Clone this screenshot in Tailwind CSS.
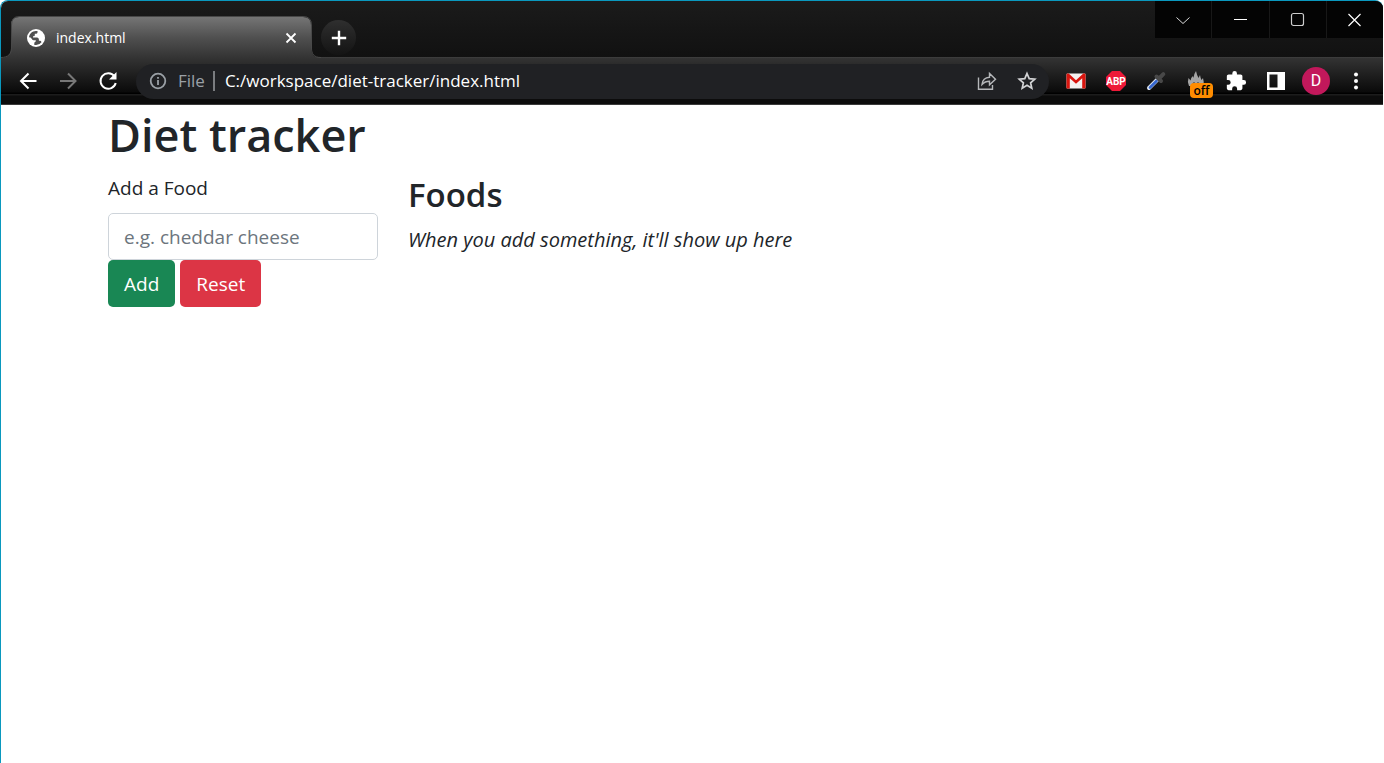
<!DOCTYPE html>
<html lang="en">
<head>
<meta charset="utf-8">
<meta name="viewport" content="width=device-width, initial-scale=1">
<title>Diet tracker</title>
<script src="https://cdn.jsdelivr.net/npm/@tailwindcss/browser@4"></script>
</head>
<body class="bg-white pr-px">
<div class="flex min-h-screen flex-col overflow-hidden rounded-t-lg border-t border-l border-[#0a98be] bg-white font-['Open_Sans','Noto_Sans',sans-serif]">

  <!-- Tab strip -->
  <header class="flex h-[57px] bg-linear-to-b from-[#1b1b1b] to-[#111111]">
    <div class="relative mt-[15px] ml-2.5 flex h-[42px] w-[300px] shrink-0 items-center pt-px pr-3 pl-[15px]">
      <svg class="absolute top-0 -left-2.5 h-[42px] w-80" viewBox="0 0 320 42" aria-hidden="true">
        <defs><linearGradient id="tab" x1="0" y1="0" x2="0" y2="1"><stop offset="0" stop-color="#757575"/><stop offset=".5" stop-color="#505050"/><stop offset="1" stop-color="#333333"/></linearGradient></defs>
        <path d="M0 42C7 42 10 38 10 32V9Q10 1 18 1H302Q310 1 310 9V32C310 38 313 42 320 42Z" fill="url(#tab)"/>
        <path d="M0 41.500C7 41.500 10.500 38 10.500 32V9Q10.500 .5 18 .5H302Q310.500 .5 310.500 9V32C310.500 38 313 41.500 320 41.500" fill="none" stroke="#484848"/>
      </svg>
      <svg class="relative size-5 shrink-0" viewBox="0 0 20 20" aria-hidden="true">
        <circle cx="10" cy="10" r="9" fill="#fff"/>
        <path d="M3 9.200C3.400 5.500 6.300 3 9.800 2.900H11.500V4.500Q11.300 5.700 10 5.800H8.800V7.200Q8.700 8 7.800 8.200H7V9.500H11Q12.800 9.700 12.900 11.500V12.700H14.200Q15.300 13 15.500 14.200Q13.500 16.900 10.200 17.100H8.300V15.200Q8.400 13.800 9.800 13.600V12.300H7.500Q6 12.200 5.700 10.800L4.500 9.600Z" fill="#505050"/>
      </svg>
      <span class="relative ml-2.5 grow text-sm text-white">index.html</span>
      <button class="relative grid size-4 place-items-center" aria-label="Close tab">
        <svg class="size-3" viewBox="0 0 12 12" stroke="#fff" stroke-width="1.800"><path d="M1.500 1.500l9 9M10.500 1.500l-9 9"/></svg>
      </button>
    </div>
    <div class="flex grow items-start border-b border-[#3c3c3c] pl-2.5">
      <button class="mt-[19px] grid size-[35px] place-items-center rounded-full bg-linear-to-b from-[#2f2f2f] to-[#141414]" aria-label="New tab">
        <svg class="size-4" viewBox="0 0 16 16" stroke="#fff" stroke-width="2.400"><path d="M8 .8v14.400M.8 8h14.400"/></svg>
      </button>
      <div class="ml-auto flex gap-px bg-[#181818]">
        <button class="grid h-[37px] w-14 place-items-center bg-[#040404]" aria-label="Search tabs"><svg class="size-4" viewBox="0 0 16 16" fill="none" stroke="#ddd"><path d="M1.500 5.500l6.500 6 6.500-6"/></svg></button>
        <button class="grid h-[37px] w-[57px] place-items-center bg-[#040404]" aria-label="Minimize"><svg class="size-4" viewBox="0 0 16 16" stroke="#fff"><path d="M1 7.500h13"/></svg></button>
        <button class="grid h-[37px] w-14 place-items-center bg-[#040404]" aria-label="Maximize"><svg class="size-4" viewBox="0 0 16 16" fill="none" stroke="#ccc" stroke-width="1.200"><rect x="1.500" y="1.500" width="12" height="12" rx="2"/></svg></button>
        <button class="grid h-[37px] w-14 place-items-center bg-[#040404]" aria-label="Close"><svg class="size-4" viewBox="0 0 16 16" stroke="#fff" stroke-width="1.200"><path d="M1.500 2l12 12M13.500 2l-12 12"/></svg></button>
      </div>
    </div>
  </header>

  <!-- Toolbar -->
  <nav class="flex h-[47px] items-center border-b border-[#3a3a3a] bg-[linear-gradient(#333_0,#0a0a0a_34px,#000_35px,#000_36px,#1c1c1c_36px,#1c1c1c_37px,#0c0c0c_38px)] pr-4 pl-[17px]">
    <div class="flex gap-5">
      <button aria-label="Back"><svg class="size-5" viewBox="0 0 20 20" fill="none" stroke="#fff" stroke-width="2"><path d="M18.500 10H3M10.500 2.500L3 10l7.500 7.500"/></svg></button>
      <button aria-label="Forward"><svg class="size-5" viewBox="0 0 20 20" fill="none" stroke="#777" stroke-width="2"><path d="M2 10h15M10 2.500l7.500 7.500-7.500 7.500"/></svg></button>
      <button aria-label="Reload"><svg class="size-5" viewBox="0 0 20 20" fill="none" stroke="#fff" stroke-width="2"><path d="M16.500 5.500A7.700 7.700 0 1 0 17.700 12"/><path d="M18.500 1v7.500H11z" fill="#fff" stroke="none"/></svg></button>
    </div>
    <div class="ml-[18px] flex h-[35px] grow items-center rounded-full bg-[#202124] pr-3 pl-3">
      <svg class="size-5 shrink-0" viewBox="0 0 20 20" fill="none" stroke="#9aa0a6" stroke-width="1.800" aria-hidden="true"><circle cx="10" cy="10" r="7.300"/><path d="M10 9v5M10 6v1.800"/></svg>
      <span class="ml-2.5 text-[17px] text-[#9aa0a6]">File</span>
      <span class="mr-2.5 ml-2 h-5 w-0.5 bg-[#7b7d80]"></span>
      <input class="min-w-0 grow bg-transparent text-[17px] text-white outline-none" type="text" aria-label="Address" value="C:/workspace/diet-tracker/index.html">
      <div class="flex gap-5">
        <button aria-label="Share"><svg class="size-5" viewBox="0 0 20 20" fill="none" stroke="#b5b7ba" stroke-width="1.400"><path d="M1.500 6.500v11.700h14V14"/><path d="M5 13.500C5.500 9 8.500 6.500 12.500 6.300V2.500l6 5.700-6 5.600v-3.500c-3.500 0-5.500 1-7.500 3.200z"/></svg></button>
        <button aria-label="Bookmark"><svg class="size-5" viewBox="0 0 20 20" fill="none" stroke="#d2d3d5" stroke-width="1.700"><path d="M10 2.500l2.200 5.100 5.600.5-4.200 3.700 1.200 5.400-4.800-2.900-4.800 2.900 1.200-5.400-4.200-3.700 5.600-.5z"/></svg></button>
      </div>
    </div>
    <div class="ml-4 flex items-center gap-[18px]">
      <button aria-label="Gmail"><svg class="h-[22px] w-[22px]" viewBox="0 0 22 22"><rect x="1.500" y="3.500" width="19" height="15" rx="1" fill="#f4f1f0"/><path d="M1.500 4.500q0-1 1-1h1.200L11 10.300l7.300-6.800h1.200q1 0 1 1v14h-3.300V8.200L11 13.800 4.800 8.200v10.300H1.500z" fill="#d9150e"/></svg></button>
      <button aria-label="Adblock Plus"><svg class="h-[22px] w-[22px]" viewBox="0 0 22 22"><path d="M7 1h8l6 6v8l-6 6H7l-6-6V7z" fill="#ee1938"/><text x="11" y="14.600" text-anchor="middle" font-size="10" font-weight="700" font-family="Roboto, sans-serif" fill="#fff">ABP</text></svg></button>
      <button aria-label="Color picker"><svg class="h-[22px] w-[22px]" viewBox="0 0 22 22" fill="none" stroke-linecap="round"><path d="M4 18L13 9" stroke="#dce3ec" stroke-width="4"/><path d="M5 17.500l6.500-6.500" stroke="#3566cf" stroke-width="2.600"/><path d="M11.500 6.500l4.500 4.500M14 8.500l4.300-4.300" stroke="#484848" stroke-width="4"/></svg></button>
      <button class="relative" aria-label="Extension, off"><svg class="h-[22px] w-[22px]" viewBox="0 0 22 22"><path d="M4 16Q2 12 3.500 8l2 2.500Q6 7 8 6l.5 2Q9 3.500 11 1q1 4.500 2.500 7L15 5q.5 3 1.500 5l1.500-2q1.500 4 0 8z" fill="#a5a5a5"/><path d="M7 16q0-3 2-4l2 2 2-2q2 1 2 4z" fill="#333"/></svg><span class="absolute top-[13px] left-[5px] flex h-[15px] w-[23px] items-center justify-center rounded-sm bg-[#ff8c00] text-xs font-semibold text-black">off</span></button>
      <button aria-label="Extensions"><svg class="h-[22px] w-[22px]" viewBox="0 0 24 24" fill="#fff"><path d="M20.500 11H19V7c0-1.100-.9-2-2-2h-4V3.500a2.500 2.500 0 0 0-5 0V5H4c-1.100 0-2 .9-2 2v3.800h1.500a2.700 2.700 0 0 1 0 5.400H2V20c0 1.100.9 2 2 2h3.800v-1.500a2.700 2.700 0 0 1 5.400 0V22H17c1.100 0 2-.9 2-2v-4h1.500a2.500 2.500 0 0 0 0-5z"/></svg></button>
      <button aria-label="Side panel"><svg class="h-[22px] w-[22px]" viewBox="0 0 22 22"><path d="M2 2h18v18H2zM4.500 4.500v13h8v-13z" fill="#fff" fill-rule="evenodd"/></svg></button>
      <div class="-ml-[3px] flex items-center gap-[15px]">
        <button class="grid size-7 place-items-center rounded-full bg-[#c2185b] font-[Roboto] text-base text-white" aria-label="Profile">D</button>
        <button aria-label="Menu"><svg class="h-[22px] w-[22px]" viewBox="0 0 22 22" fill="#fff"><circle cx="11" cy="4.500" r="2"/><circle cx="11" cy="11" r="2"/><circle cx="11" cy="17.500" r="2"/></svg></button>
      </div>
    </div>
  </nav>

  <!-- Page -->
  <main class="mx-auto w-full max-w-[1200px] px-4 text-[19px] leading-[30px] text-[#212529]">
    <h1 class="text-[45px] leading-[60px] font-semibold">Diet tracker</h1>
    <div class="mt-2 flex gap-[30px]">
      <form class="w-[270px] shrink-0">
        <label class="block" for="food">Add a Food</label>
        <input id="food" type="text" placeholder="e.g. cheddar cheese" class="mt-2.5 block h-[47px] w-full rounded-[5px] border border-[#ced4da] px-[15px] placeholder:text-[#6c757d]">
        <div class="flex gap-[5px] text-white">
          <button type="button" class="h-[47px] rounded-[5px] bg-[#198754] px-4">Add</button>
          <button type="reset" class="h-[47px] rounded-[5px] bg-[#dc3545] px-4">Reset</button>
        </div>
      </form>
      <section class="grow">
        <h2 class="text-[33px] leading-[44px] font-semibold">Foods</h2>
        <p class="mt-2 text-xl leading-[30px] italic">When you add something, it'll show up here</p>
      </section>
    </div>
  </main>
</div>
</body>
</html>
